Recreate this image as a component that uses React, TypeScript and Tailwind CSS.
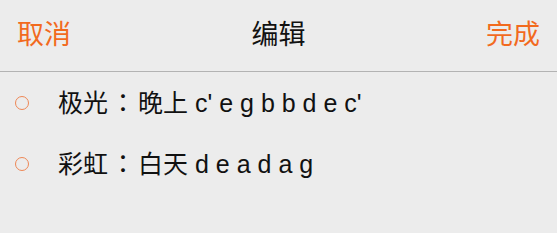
export default function App() {
  const rows = [
    { name: '极光', time: '晚上', notes: "c' e g b b d e c'" },
    { name: '彩虹', time: '白天', notes: 'd e a d a g' },
  ];
  return (
    <div
      className="h-[233px] w-[557px] bg-[#ececec] text-[#111]"
      style={{ fontFamily: '"Liberation Sans", "Noto Sans CJK SC", sans-serif' }}
    >
      <div className="flex h-[72px] items-center justify-between border-b border-[#b3b3b3] px-[17px] text-[27px]">
        <span className="text-[#f26a1e]">取消</span>
        <span>编辑</span>
        <span className="text-[#f26a1e]">完成</span>
      </div>
      <div>
        {rows.map((r) => (
          <div key={r.name} className="flex h-[61px] items-center">
            <span className="ml-[15px] h-[14px] w-[14px] rounded-full border-[1.5px] border-[#ee8755]" />
            <span className="ml-[29px] text-[25px]">
              {r.name}
              <span className="px-[2.5px]" style={{ fontFamily: '"Noto Sans CJK TC", sans-serif' }}>：</span>
              {r.time} {r.notes}
            </span>
          </div>
        ))}
      </div>
    </div>
  );
}
